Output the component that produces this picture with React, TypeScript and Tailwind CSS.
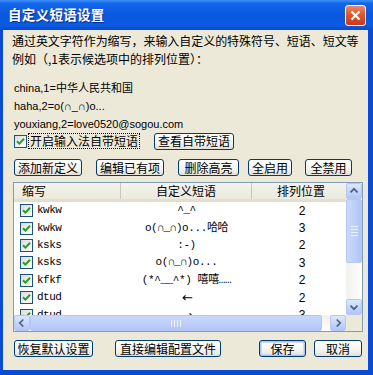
import React from "react";

const cjk = "font-['Noto_Sans_CJK_SC','Noto_Sans',sans-serif]";

function Btn({ children, w, primary = false }: { children: React.ReactNode; w: string; primary?: boolean }) {
  return (
    <div
      className={`${w} h-[17px] flex items-center justify-center rounded-[3px] border border-[#003c74] bg-[linear-gradient(180deg,#ffffff_0%,#f4f4f0_60%,#e3e1d6_100%)] text-[12px] leading-none text-black ${cjk} ${
        primary ? "shadow-[inset_0_0_0_1px_#a9c3f0,inset_0_0_0_2px_#cfdcf7]" : ""
      }`}
    >
      {children}
    </div>
  );
}

function Check() {
  return (
    <div className="w-[13px] h-[13px] border border-[#1c5180] bg-[linear-gradient(135deg,#dcdcd7_0%,#ffffff_100%)] flex items-center justify-center shrink-0">
      <svg width="9" height="9" viewBox="0 0 9 9">
        <path d="M1 4.2 L3.4 6.6 L8 1.8" stroke="#21a121" strokeWidth="2" fill="none" />
      </svg>
    </div>
  );
}

function Arrow({ dir }: { dir: "up" | "down" | "left" | "right" }) {
  const paths: Record<string, string> = {
    up: "M4 9.5 L8 5.5 L12 9.5",
    down: "M4 6.5 L8 10.5 L12 6.5",
    left: "M9.5 4 L5.5 8 L9.5 12",
    right: "M6.5 4 L10.5 8 L6.5 12",
  };
  return (
    <div className="w-[16px] h-[16px] rounded-[2px] border border-[#b5c8f3] bg-[linear-gradient(180deg,#dce6fd_0%,#c3d4fb_60%,#b1c6f7_100%)] flex items-center justify-center shrink-0">
      <svg width="16" height="16" viewBox="0 0 16 16">
        <path d={paths[dir]} stroke="#4d6185" strokeWidth="2" fill="none" />
      </svg>
    </div>
  );
}

const rows = [
  ["kwkw", "^_^", "2"],
  ["kwkw", "o(∩_∩)o...哈哈", "3"],
  ["ksks", ":-)", "2"],
  ["ksks", "o(∩_∩)o...", "3"],
  ["kfkf", "(*^__^*) 嘻嘻……", "2"],
  ["dtud", "←", "2"],
  ["dtud", "→", "3"],
];

export default function App() {
  return (
    <div className="w-[373px] h-[375px] bg-[#0a4ad6] flex flex-col overflow-hidden select-none">
      {/* Title bar */}
      <div className="h-[30px] shrink-0 flex items-center pl-[8px] pr-[7px] bg-[linear-gradient(180deg,#3d8ff9_0%,#1366ea_12%,#0a58df_50%,#0a5ae3_85%,#0849c6_100%)]">
        <div className={`flex-1 text-white font-bold text-[13.5px] leading-none tracking-[0.3px] ${cjk} [text-shadow:1px_1px_0_#0a2f8a]`}>
          自定义短语设置
        </div>
        <div className="w-[21px] h-[21px] rounded-[3px] border border-white bg-[linear-gradient(180deg,#eb8a6a_0%,#e0562f_45%,#c9391a_100%)] flex items-center justify-center">
          <svg width="13" height="13" viewBox="0 0 13 13">
            <path d="M2.5 2.5 L10.5 10.5 M10.5 2.5 L2.5 10.5" stroke="white" strokeWidth="2.2" />
          </svg>
        </div>
      </div>

      {/* Body */}
      <div className="flex-1 ml-[3px] mr-[5px] mb-[5px] bg-[#ece9d8] flex flex-col pl-[9px] pt-[3px]">
        <div className={`h-[16px] flex items-center text-[12px] text-black leading-none ${cjk} tracking-[-0.05px]`}>
          通过英文字符作为缩写，来输入自定义的特殊符号、短语、短文等
        </div>
        <div className={`mt-[2px] h-[16px] flex items-center text-[12px] text-black leading-none ${cjk}`}>
          例如（,1表示候选项中的排列位置）：
        </div>

        <div className="mt-[12px] flex flex-col text-[11px] text-black leading-none font-['Liberation_Sans','Noto_Sans_CJK_SC',sans-serif] pl-[2px]">
          <div className="h-[18px] flex items-center">china,1=中华人民共和国</div>
          <div className="h-[18px] flex items-center">haha,2=o(∩_∩)o...</div>
          <div className="h-[18px] flex items-center">youxiang,2=love0520@sogou.com</div>
        </div>

        <div className="mt-[0px] h-[16px] flex items-center">
          <div className="ml-[2px]">
            <Check />
          </div>
          <div className={`ml-[1px] px-[1px] h-[16px] flex items-center border border-dotted border-black text-[12px] leading-none ${cjk}`}>
            开启输入法自带短语
          </div>
          <div className="ml-[14px]">
            <Btn w="w-[80px]">查看自带短语</Btn>
          </div>
        </div>

        <div className="mt-[10px] flex items-center">
          <div className="ml-[2px]"><Btn w="w-[68px]">添加新定义</Btn></div>
          <div className="ml-[14px]"><Btn w="w-[68px]">编辑已有项</Btn></div>
          <div className="ml-[14px]"><Btn w="w-[61px]">删除高亮</Btn></div>
          <div className="ml-[9px]"><Btn w="w-[44px]">全启用</Btn></div>
          <div className="ml-[13px]"><Btn w="w-[47px]">全禁用</Btn></div>
        </div>

        {/* List */}
        <div className="mt-[6px] ml-[1px] w-[350px] h-[150px] border border-[#7f9db9] bg-white flex flex-col overflow-hidden">
          <div className="flex flex-1 min-h-0">
            <div className="flex-1 flex flex-col overflow-hidden">
              <div className={`h-[19px] shrink-0 flex bg-[linear-gradient(180deg,#f4f3ee_0%,#ebeadb_100%)] border-b-[3px] border-[#e2dfd0] text-[12px] leading-none text-black ${cjk}`}>
                <div className="w-[107px] flex items-center pl-[8px] border-r border-[#cbc7b8]">缩写</div>
                <div className="w-[131px] flex items-center justify-center border-r border-[#cbc7b8]">自定义短语</div>
                <div className="flex-1 flex items-center justify-center pl-[4px]">排列位置</div>
              </div>
              {rows.map((r, i) => {
                const isArrow = r[1] === "←" || r[1] === "→";
                return (
                  <div key={i} className="h-[17.4px] shrink-0 flex items-center text-[12px] leading-none text-black">
                    <div className="w-[107px] flex items-center pl-[6px]">
                      <Check />
                      <span className="ml-[4px] font-['Liberation_Mono','Noto_Sans_CJK_SC',monospace] text-[11px] tracking-[-0.5px]">{r[0]}</span>
                    </div>
                    <div
                      className={`w-[131px] flex justify-center whitespace-nowrap ${
                        isArrow
                          ? "font-['DejaVu_Sans',sans-serif] text-[13px] pl-[2px]"
                          : "font-['Liberation_Mono','Noto_Sans_CJK_SC',monospace] text-[11px] tracking-[-0.4px]"
                      }`}
                    >
                      {r[1]}
                    </div>
                    <div className="flex-1 flex justify-center pl-[6px] font-['Liberation_Sans',sans-serif] text-[12px]">{r[2]}</div>
                  </div>
                );
              })}
            </div>
            {/* vertical scrollbar */}
            <div className="w-[16px] shrink-0 flex flex-col bg-[linear-gradient(90deg,#f3f1ec_0%,#fefefb_100%)]">
              <Arrow dir="up" />
              <div className="h-[64px] rounded-[2px] border border-[#b5c8f3] bg-[linear-gradient(90deg,#c9d8fc_0%,#bccefa_60%,#b0c5f6_100%)] flex flex-col items-center justify-center gap-[2px]">
                <div className="w-[7px] h-[1px] bg-[#eef3fe]" />
                <div className="w-[7px] h-[1px] bg-[#eef3fe]" />
                <div className="w-[7px] h-[1px] bg-[#eef3fe]" />
                <div className="w-[7px] h-[1px] bg-[#eef3fe]" />
              </div>
              <div className="flex-1" />
              <Arrow dir="down" />
            </div>
          </div>
          {/* horizontal scrollbar */}
          <div className="h-[16px] shrink-0 flex bg-[linear-gradient(180deg,#f3f1ec_0%,#fefefb_100%)]">
            <Arrow dir="left" />
            <div className="w-[292px] rounded-[2px] border border-[#b5c8f3] bg-[linear-gradient(180deg,#c9d8fc_0%,#bccefa_60%,#b0c5f6_100%)] flex items-center justify-center gap-[2px]">
              <div className="w-[1px] h-[7px] bg-[#eef3fe]" />
              <div className="w-[1px] h-[7px] bg-[#eef3fe]" />
              <div className="w-[1px] h-[7px] bg-[#eef3fe]" />
              <div className="w-[1px] h-[7px] bg-[#eef3fe]" />
            </div>
            <div className="flex-1" />
            <Arrow dir="right" />
            <div className="w-[16px] bg-[#ece9d8]" />
          </div>
        </div>

        {/* bottom buttons */}
        <div className="mt-[8px] flex items-center">
          <div className="ml-[2px]"><Btn w="w-[79px]">恢复默认设置</Btn></div>
          <div className="ml-[22px]"><Btn w="w-[106px]">直接编辑配置文件</Btn></div>
          <div className="ml-[38px]"><Btn w="w-[47px]" primary>保存</Btn></div>
          <div className="ml-[8px]"><Btn w="w-[48px]">取消</Btn></div>
        </div>
      </div>
    </div>
  );
}
